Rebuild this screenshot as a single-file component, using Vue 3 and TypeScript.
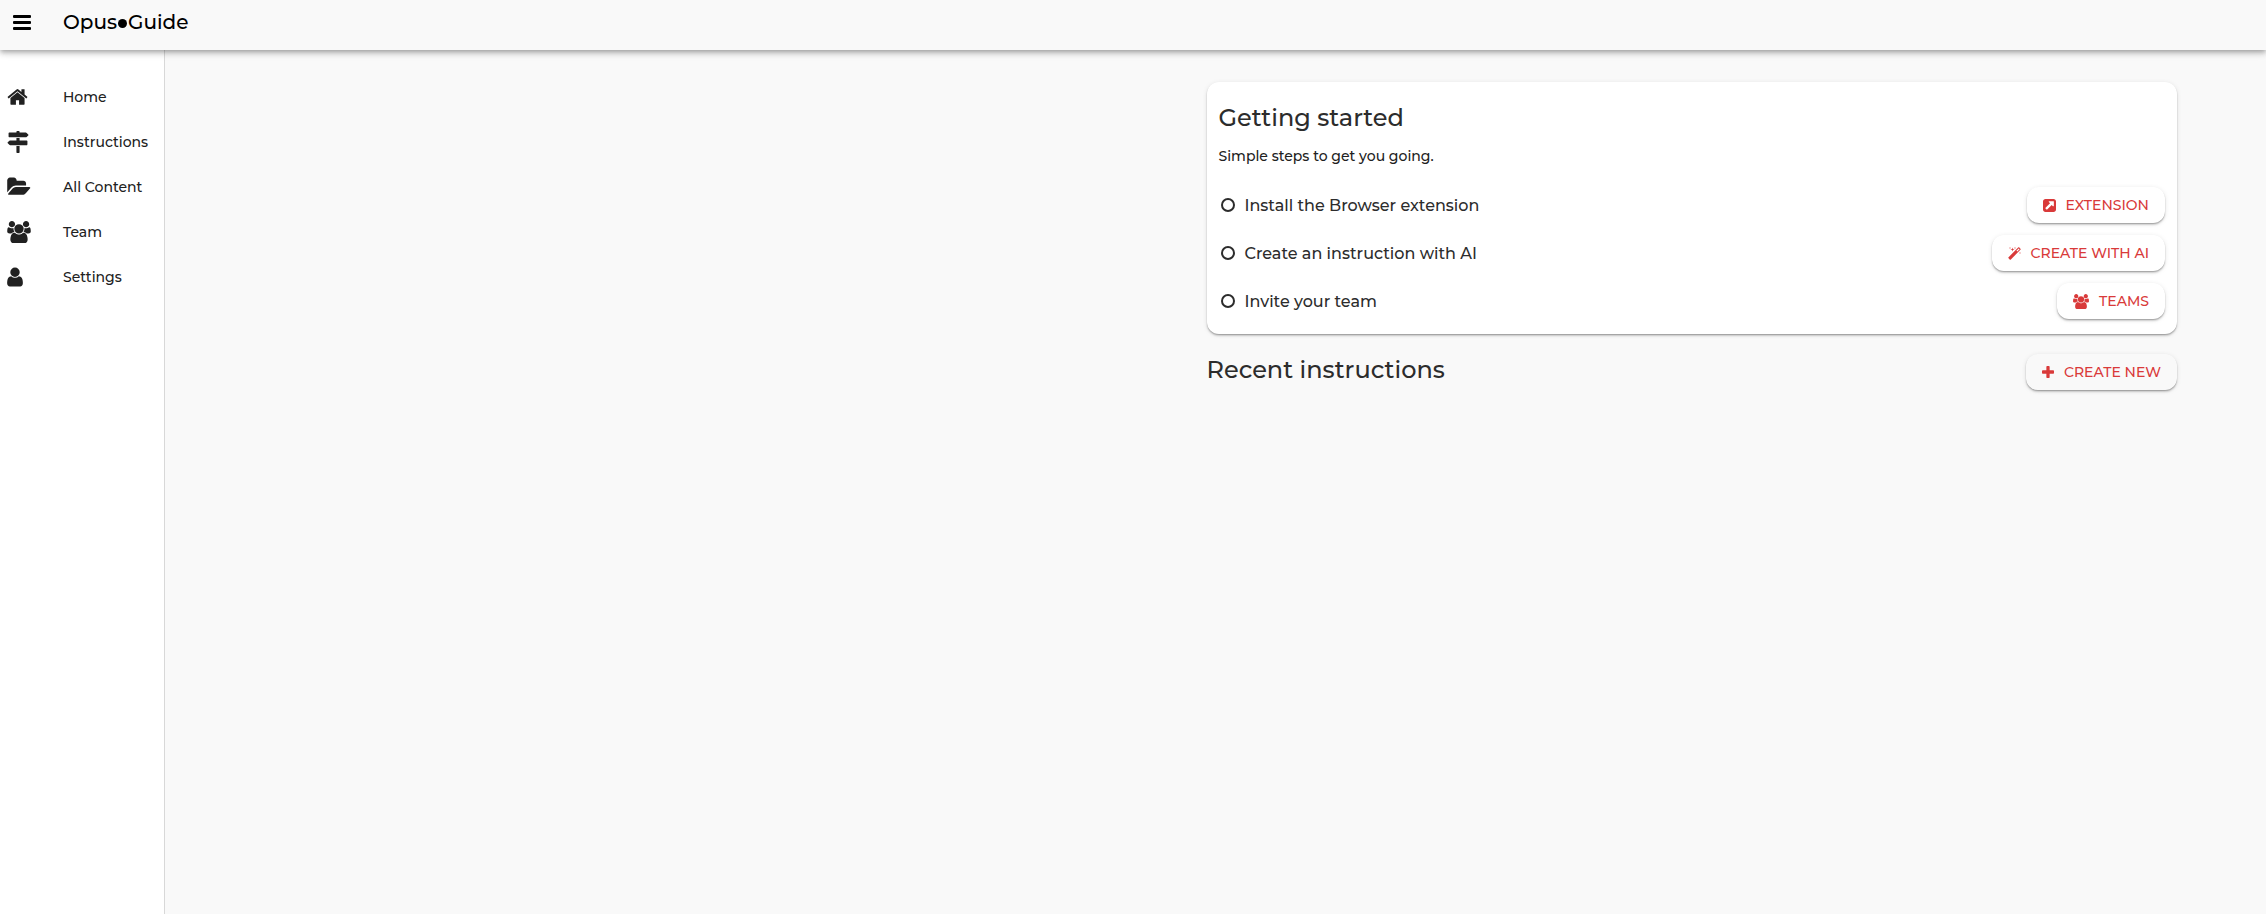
<script setup lang="ts">
interface Icon {
  viewBox: string
  width: number
  height: number
  path: string
}

const usersPath =
  'M593 896q-162 5-265 128h-134q-82 0-138-40.5t-56-118.5q0-353 124-353 6 0 43.5 21t97.5 42.5 119 21.5q67 0 133-23-5 37-5 66 0 139 81 256zm1071 637q0 120-73 189.5t-194 69.5h-874q-121 0-194-69.5t-73-189.5q0-53 3.5-103.5t14-109 26.5-108.5 43-97.5 62-81 85.5-53.5 111.5-20q10 0 43 21.5t73 48 107 48 135 21.5 135-21.5 107-48 73-48 43-21.5q61 0 111.5 20t85.5 53.5 62 81 43 97.5 26.5 108.5 14 109 3.5 103.5zm-1024-1277q0 106-75 181t-181 75-181-75-75-181 75-181 181-75 181 75 75 181zm704 384q0 159-112.5 271.5t-271.5 112.5-271.5-112.5-112.5-271.5 112.5-271.5 271.5-112.5 271.5 112.5 112.5 271.5zm576 225q0 78-56 118.5t-138 40.5h-134q-103-123-265-128 81-117 81-256 0-29-5-66 66 23 133 23 59 0 119-21.5t97.5-42.5 43.5-21q124 0 124 353zm-128-609q0 106-75 181t-181 75-181-75-75-181 75-181 181-75 181 75 75 181z'

const nav: { label: string; icon: Icon }[] = [
  {
    label: 'Home',
    icon: {
      viewBox: '64 0 1664 1792',
      width: 21,
      height: 22,
      path: 'M1472 992v480q0 26-19 45t-45 19h-384v-384h-256v384h-384q-26 0-45-19t-19-45v-480q0-1 .5-3t.5-3l575-474 575 474q1 2 1 6zm223-69l-62 74q-8 9-21 11h-3q-13 0-21-7l-692-577-692 577q-12 8-24 7-13-2-21-11l-62-74q-8-10-7-23.5t11-21.5l719-599q32-26 76-26t76 26l244 204v-195q0-14 9-23t23-9h192q14 0 23 9t9 23v408l219 182q10 8 11 21.5t-7 23.5z',
    },
  },
  {
    label: 'Instructions',
    icon: {
      viewBox: '0 0 1792 1792',
      width: 22,
      height: 22,
      path: 'M1745 297q10 10 10 23t-10 23l-141 141q-28 28-68 28h-1344q-26 0-45-19t-19-45v-256q0-26 19-45t45-19h576v-64q0-26 19-45t45-19h128q26 0 45 19t19 45v64h512q40 0 68 28zm-977 919h256v512q0 26-19 45t-45 19h-128q-26 0-45-19t-19-45v-512zm832-448q26 0 45 19t19 45v256q0 26-19 45t-45 19h-1344q-40 0-68-28l-141-141q-10-10-10-23t10-23l141-141q28-28 68-28h512v-192h256v192h576z',
    },
  },
  {
    label: 'All Content',
    icon: {
      viewBox: '0 0 1920 1792',
      width: 24,
      height: 22,
      path: 'M1879 952q0 31-31 66l-336 396q-43 51-120.5 86.5t-143.5 35.5h-1088q-34 0-60.5-13t-26.5-43q0-31 31-66l336-396q43-51 120.5-86.5t143.5-35.5h1088q34 0 60.5 13t26.5 43zm-343-344v160h-832q-94 0-197 47.5t-164 119.5l-337 396-5 6q0-4-.5-12.5t-.5-12.5v-960q0-92 66-158t158-66h320q92 0 158 66t66 158v32h544q92 0 158 66t66 158z',
    },
  },
  { label: 'Team', icon: { viewBox: '0 0 1920 1792', width: 24, height: 22, path: usersPath } },
  {
    label: 'Settings',
    icon: {
      viewBox: '256 0 1280 1792',
      width: 16,
      height: 22,
      path: 'M1536 1399q0 109-62.5 187t-150.5 78h-854q-88 0-150.5-78t-62.5-187q0-85 8.5-160.5t31.5-152 58.5-131 94-89 134.5-34.5q131 128 313 128t313-128q76 0 134.5 34.5t94 89 58.5 131 31.5 152 8.5 160.5zm-256-887q0 159-112.5 271.5t-271.5 112.5-271.5-112.5-112.5-271.5 112.5-271.5 271.5-112.5 271.5 112.5 112.5 271.5z',
    },
  },
]

const steps: { text: string; action: string; icon: Icon }[] = [
  {
    text: 'Install the Browser extension',
    action: 'EXTENSION',
    icon: {
      viewBox: '128 128 1536 1536',
      width: 13,
      height: 13,
      path: 'M1408 928v-480q0-26-19-45t-45-19h-480q-42 0-59 39-17 41 14 70l144 144-534 534q-19 19-19 45t19 45l102 102q19 19 45 19t45-19l534-534 144 144q18 19 45 19 12 0 25-5 39-17 39-59zm256-512v960q0 119-84.5 203.5t-203.5 84.5h-960q-119 0-203.5-84.5t-84.5-203.5v-960q0-119 84.5-203.5t203.5-84.5h960q119 0 203.5 84.5t84.5 203.5z',
    },
  },
  {
    text: 'Create an instruction with AI',
    action: 'CREATE WITH AI',
    icon: {
      viewBox: '64 0 1664 1664',
      width: 13,
      height: 13,
      path: 'M1254 581l293-293-107-107-293 293zm447-293q0 27-18 45l-1286 1286q-18 18-45 18t-45-18l-198-198q-18-18-18-45t18-45l1286-1286q18-18 45-18t45 18l198 198q18 18 18 45zm-1351-190l98 30-98 30-30 98-30-98-98-30 98-30 30-98zm350 162l196 60-196 60-60 196-60-196-196-60 196-60 60-196zm930 478l98 30-98 30-30 98-30-98-98-30 98-30 30-98zm-640-640l98 30-98 30-30 98-30-98-98-30 98-30 30-98z',
    },
  },
  {
    text: 'Invite your team',
    action: 'TEAMS',
    icon: { viewBox: '0 0 1920 1792', width: 16, height: 15, path: usersPath },
  },
]

const plus: Icon = {
  viewBox: '192 128 1408 1408',
  width: 12,
  height: 12,
  path: 'M1600 736v192q0 40-28 68t-68 28h-416v416q0 40-28 68t-68 28h-192q-40 0-68-28t-28-68v-416h-416q-40 0-68-28t-28-68v-192q0-40 28-68t68-28h416v-416q0-40 28-68t68-28h192q40 0 68 28t28 68v416h416q40 0 68 28t28 68z',
}
</script>

<template>
  <div class="layout">
    <header class="topbar">
      <button class="menu" type="button" aria-label="Menu">
        <svg width="18" height="15" viewBox="0 0 18 15" aria-hidden="true">
          <rect width="18" height="3" rx="1" />
          <rect y="6" width="18" height="3" rx="1" />
          <rect y="12" width="18" height="3" rx="1" />
        </svg>
      </button>
      <a class="brand" href="#">Opus<span class="dot"></span>Guide</a>
    </header>

    <div class="body">
      <nav class="drawer" aria-label="Main">
        <a v-for="item in nav" :key="item.label" class="nav-item" href="#">
          <span class="nav-icon">
            <svg :width="item.icon.width" :height="item.icon.height" :viewBox="item.icon.viewBox" aria-hidden="true">
              <path :d="item.icon.path" />
            </svg>
          </span>
          <span>{{ item.label }}</span>
        </a>
      </nav>

      <main class="page">
        <div class="column">
          <section class="card">
            <h2 class="title">Getting started</h2>
            <p class="subtitle">Simple steps to get you going.</p>
            <ul class="steps">
              <li v-for="step in steps" :key="step.action" class="step">
                <svg class="ring" width="14" height="14" viewBox="0 0 14 14" aria-hidden="true">
                  <circle cx="7" cy="7" r="6" />
                </svg>
                <span class="step-text">{{ step.text }}</span>
                <button class="action" type="button">
                  <svg :width="step.icon.width" :height="step.icon.height" :viewBox="step.icon.viewBox" aria-hidden="true">
                    <path :d="step.icon.path" />
                  </svg>
                  {{ step.action }}
                </button>
              </li>
            </ul>
          </section>

          <section class="recent">
            <h2 class="title">Recent instructions</h2>
            <button class="action" type="button">
              <svg :width="plus.width" :height="plus.height" :viewBox="plus.viewBox" aria-hidden="true">
                <path :d="plus.path" />
              </svg>
              CREATE NEW
            </button>
          </section>
        </div>
      </main>
    </div>
  </div>
</template>

<style>
body {
  margin: 0;
}
</style>

<style scoped>
.layout {
  display: flex;
  flex-direction: column;
  min-height: 100vh;
  background: #f9f9f9;
  color: #212121;
  font-family: Montserrat, Inter, 'Liberation Sans', sans-serif;
  font-size: 14px;
  font-weight: 500;
}

.topbar {
  display: flex;
  align-items: center;
  box-sizing: border-box;
  height: 50px;
  padding: 0 12px 6px;
  background: #f9f9f9;
  box-shadow:
    0 2px 4px -1px rgba(0, 0, 0, 0.2),
    0 4px 5px rgba(0, 0, 0, 0.14),
    0 1px 10px rgba(0, 0, 0, 0.12);
  z-index: 1;
}

.menu {
  display: flex;
  width: 51px;
  padding: 0 1px;
  border: 0;
  background: none;
}

.brand {
  display: flex;
  align-items: center;
  color: #000;
  font-size: 20px;
  line-height: 28px;
  text-decoration: none;
}

.dot {
  width: 9px;
  height: 9px;
  margin: 3px 1px 0;
  border-radius: 50%;
  background: #000;
}

.body {
  display: flex;
  flex: 1;
}

.drawer {
  box-sizing: border-box;
  flex: none;
  width: 165px;
  padding-top: 24px;
  border-right: 1px solid #d8d8d8;
  background: #fff;
}

.nav-item {
  display: flex;
  align-items: center;
  height: 45px;
  padding-left: 7px;
  color: inherit;
  text-decoration: none;
}

.nav-icon {
  display: flex;
  width: 56px;
}

svg {
  flex: none;
  fill: currentColor;
}

.page {
  flex: 1;
  padding: 32px 89px;
}

.column {
  width: calc(50% + 9px);
  margin-left: auto;
}

.card {
  box-sizing: border-box;
  padding: 20px 12px 9px;
  border-radius: 12px;
  background: #fff;
  box-shadow:
    0 1px 5px rgba(0, 0, 0, 0.1),
    0 2px 2px rgba(0, 0, 0, 0.14),
    0 1px 1px rgba(0, 0, 0, 0.2);
}

.title {
  margin: 0;
  color: #2c2c2c;
  font-size: 24px;
  font-weight: 500;
  line-height: 32px;
}

.subtitle {
  margin: 12px 0 15px;
  line-height: 20px;
}

.steps {
  margin: 0;
  padding: 0;
  list-style: none;
}

.step {
  display: flex;
  align-items: center;
  height: 48px;
  padding-left: 2px;
}

.ring {
  fill: none;
  stroke: #2c2c2c;
  stroke-width: 2;
}

.step-text {
  flex: 1;
  padding-left: 10px;
  color: #2c2c2c;
  font-size: 16px;
}

.action {
  display: flex;
  align-items: center;
  gap: 10px;
  height: 36px;
  padding: 0 16px;
  border: 0;
  border-radius: 12px;
  background: transparent;
  box-shadow:
    0 1px 5px rgba(0, 0, 0, 0.1),
    0 2px 2px rgba(0, 0, 0, 0.14),
    0 1px 1px rgba(0, 0, 0, 0.2);
  color: #d93a3a;
  font: inherit;
}

.recent {
  display: flex;
  align-items: flex-start;
  justify-content: space-between;
  padding-top: 20px;
}
</style>
